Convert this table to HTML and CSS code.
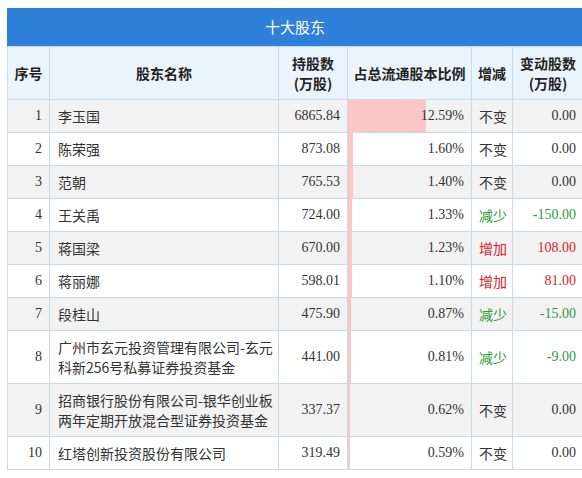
FILE: index.html
```html
<!DOCTYPE html>
<html lang="zh">
<head>
<meta charset="utf-8">
<link rel="stylesheet" href="styles.css">
</head>
<body>
<div class="wrap">
  <div class="title">十大股东</div>
  <table class="tbl">
    <colgroup>
      <col class="c-no"><col class="c-name"><col class="c-hold"><col class="c-pct"><col class="c-chg"><col class="c-amt">
    </colgroup>
    <thead>
      <tr>
        <th>序号</th>
        <th>股东名称</th>
        <th>持股数<br>(万股)</th>
        <th>占总流通股本比例</th>
        <th>增减</th>
        <th>变动股数<br>(万股)</th>
      </tr>
    </thead>
    <tbody>
      <tr><td class="num">1</td><td class="name">李玉国</td><td class="num">6865.84</td><td class="num pct" style="--w:78px">12.59%</td><td class="chg">不变</td><td class="num">0.00</td></tr>
      <tr><td class="num">2</td><td class="name">陈荣强</td><td class="num">873.08</td><td class="num pct" style="--w:5px">1.60%</td><td class="chg">不变</td><td class="num">0.00</td></tr>
      <tr><td class="num">3</td><td class="name">范朝</td><td class="num">765.53</td><td class="num pct" style="--w:5px">1.40%</td><td class="chg">不变</td><td class="num">0.00</td></tr>
      <tr><td class="num">4</td><td class="name">王关禹</td><td class="num">724.00</td><td class="num pct" style="--w:4px">1.33%</td><td class="chg down">减少</td><td class="num down">-150.00</td></tr>
      <tr><td class="num">5</td><td class="name">蒋国梁</td><td class="num">670.00</td><td class="num pct" style="--w:4px">1.23%</td><td class="chg up">增加</td><td class="num up">108.00</td></tr>
      <tr><td class="num">6</td><td class="name">蒋丽娜</td><td class="num">598.01</td><td class="num pct" style="--w:4px">1.10%</td><td class="chg up">增加</td><td class="num up">81.00</td></tr>
      <tr><td class="num">7</td><td class="name">段桂山</td><td class="num">475.90</td><td class="num pct" style="--w:3px">0.87%</td><td class="chg down">减少</td><td class="num down">-15.00</td></tr>
      <tr><td class="num">8</td><td class="name">广州市玄元投资管理有限公司-玄元<br>科新256号私募证券投资基金</td><td class="num">441.00</td><td class="num pct" style="--w:3px">0.81%</td><td class="chg down">减少</td><td class="num down">-9.00</td></tr>
      <tr><td class="num">9</td><td class="name">招商银行股份有限公司-银华创业板<br>两年定期开放混合型证券投资基金</td><td class="num">337.37</td><td class="num pct" style="--w:2px">0.62%</td><td class="chg">不变</td><td class="num">0.00</td></tr>
      <tr><td class="num">10</td><td class="name">红塔创新投资股份有限公司</td><td class="num">319.49</td><td class="num pct" style="--w:2px">0.59%</td><td class="chg">不变</td><td class="num">0.00</td></tr>
    </tbody>
  </table>
</div>
</body>
</html>
```

FILE: styles.css
```css
html, body {
  margin: 0;
  padding: 0;
  background: #ffffff;
}
body {
  overflow: hidden;
}
.wrap {
  margin: 8px 0 0 7px;
  width: 576px;
}
.title {
  height: 38px;
  line-height: 38px;
  background: #2f80d9;
  color: #ffffff;
  text-align: center;
  font-family: "Noto Sans CJK SC", sans-serif;
  font-size: 15px;
}
.tbl {
  border-collapse: collapse;
  table-layout: fixed;
  width: 576px;
  font-size: 14px;
  color: #333333;
}
.c-no { width: 42px; }
.c-name { width: 229px; }
.c-hold { width: 69px; }
.c-pct { width: 124px; }
.c-chg { width: 41px; }
.c-amt { width: 71px; }
.tbl th, .tbl td {
  border: 1px solid #c8d9ea;
  line-height: 20px;
  padding: 6px 7px;
  overflow: hidden;
  white-space: nowrap;
}
.tbl th {
  background: #eaf4fd;
  font-family: "Noto Sans CJK SC", sans-serif;
  font-weight: bold;
  color: #222222;
  text-align: center;
  padding: 6px 2px;
}
.tbl th:first-child {
  padding: 6px 0;
}
.tbl tbody tr:nth-child(odd) {
  background: #f2f2f2;
}
.tbl tbody tr:nth-child(even) {
  background: #ffffff;
}
.num {
  font-family: "Liberation Serif", "Noto Sans CJK SC", serif;
  text-align: right;
}
.tbl td.name {
  font-family: "Noto Sans CJK SC", sans-serif;
  text-align: left;
  padding-left: 8px;
  padding-right: 2px;
}
.tbl td.chg {
  font-family: "Noto Sans CJK SC", sans-serif;
  text-align: left;
  padding-left: 7px;
  padding-right: 0;
}
.pct {
  background-image: linear-gradient(to right, #fcc6c6 var(--w), transparent var(--w));
  background-repeat: no-repeat;
}
.up {
  color: #e0212b;
}
.down {
  color: #2e9a42;
}
```
